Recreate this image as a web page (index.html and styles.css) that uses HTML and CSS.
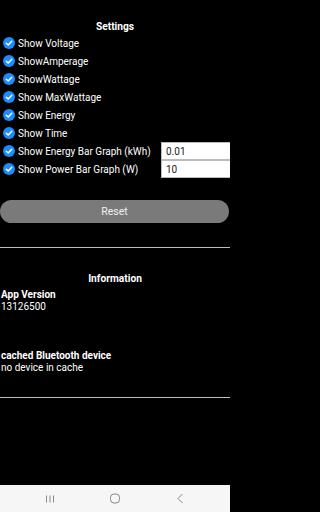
FILE: index.html
```html
<!DOCTYPE html>
<html>
<head>
<meta charset="utf-8">
<link rel="stylesheet" href="styles.css">
</head>
<body>
<div class="screen">
  <main class="content">
    <h2 class="title settings-title">Settings</h2>
    <ul class="options">
      <li class="opt"><span class="check"><svg viewBox="0 0 12 12"><circle cx="6" cy="6" r="6" fill="#1a8cff"/><path d="M3.3 6.2 L5.2 8 L8.8 4.3" fill="none" stroke="#fff" stroke-width="1.5" stroke-linecap="round" stroke-linejoin="round"/></svg></span><span class="lbl">Show Voltage</span></li>
      <li class="opt"><span class="check"><svg viewBox="0 0 12 12"><circle cx="6" cy="6" r="6" fill="#1a8cff"/><path d="M3.3 6.2 L5.2 8 L8.8 4.3" fill="none" stroke="#fff" stroke-width="1.5" stroke-linecap="round" stroke-linejoin="round"/></svg></span><span class="lbl">ShowAmperage</span></li>
      <li class="opt"><span class="check"><svg viewBox="0 0 12 12"><circle cx="6" cy="6" r="6" fill="#1a8cff"/><path d="M3.3 6.2 L5.2 8 L8.8 4.3" fill="none" stroke="#fff" stroke-width="1.5" stroke-linecap="round" stroke-linejoin="round"/></svg></span><span class="lbl">ShowWattage</span></li>
      <li class="opt"><span class="check"><svg viewBox="0 0 12 12"><circle cx="6" cy="6" r="6" fill="#1a8cff"/><path d="M3.3 6.2 L5.2 8 L8.8 4.3" fill="none" stroke="#fff" stroke-width="1.5" stroke-linecap="round" stroke-linejoin="round"/></svg></span><span class="lbl">Show MaxWattage</span></li>
      <li class="opt"><span class="check"><svg viewBox="0 0 12 12"><circle cx="6" cy="6" r="6" fill="#1a8cff"/><path d="M3.3 6.2 L5.2 8 L8.8 4.3" fill="none" stroke="#fff" stroke-width="1.5" stroke-linecap="round" stroke-linejoin="round"/></svg></span><span class="lbl">Show Energy</span></li>
      <li class="opt"><span class="check"><svg viewBox="0 0 12 12"><circle cx="6" cy="6" r="6" fill="#1a8cff"/><path d="M3.3 6.2 L5.2 8 L8.8 4.3" fill="none" stroke="#fff" stroke-width="1.5" stroke-linecap="round" stroke-linejoin="round"/></svg></span><span class="lbl">Show Time</span></li>
      <li class="opt"><span class="check"><svg viewBox="0 0 12 12"><circle cx="6" cy="6" r="6" fill="#1a8cff"/><path d="M3.3 6.2 L5.2 8 L8.8 4.3" fill="none" stroke="#fff" stroke-width="1.5" stroke-linecap="round" stroke-linejoin="round"/></svg></span><span class="lbl">Show Energy Bar Graph (kWh)</span><input class="field" type="text" value="0.01"></li>
      <li class="opt"><span class="check"><svg viewBox="0 0 12 12"><circle cx="6" cy="6" r="6" fill="#1a8cff"/><path d="M3.3 6.2 L5.2 8 L8.8 4.3" fill="none" stroke="#fff" stroke-width="1.5" stroke-linecap="round" stroke-linejoin="round"/></svg></span><span class="lbl">Show Power Bar Graph (W)</span><input class="field" type="text" value="10"></li>
    </ul>
    <button class="reset">Reset</button>
    <hr class="divider">
    <h2 class="title info-title">Information</h2>
    <div class="info">
      <div class="info-item">
        <div class="info-key">App Version</div>
        <div class="info-val">13126500</div>
      </div>
      <div class="info-item second">
        <div class="info-key">cached Bluetooth device</div>
        <div class="info-val">no device in cache</div>
      </div>
    </div>
    <hr class="divider divider-2">
  </main>
  <nav class="navbar">
    <span class="nav-btn"><svg width="12" height="10" viewBox="0 0 12 10"><path d="M2.5 1.5v7M6 1.5v7M9.5 1.5v7" stroke="#888" stroke-width="1" fill="none"/></svg></span>
    <span class="nav-btn"><svg width="12" height="11" viewBox="0 0 12 11"><rect x="1.5" y="1" width="9" height="9" rx="3.5" stroke="#888" stroke-width="1" fill="none"/></svg></span>
    <span class="nav-btn"><svg width="12" height="11" viewBox="0 0 12 11"><path d="M8.5 1 L4 5.5 L8.5 10" stroke="#888" stroke-width="1" fill="none"/></svg></span>
  </nav>
</div>
</body>
</html>
```
FILE: styles.css
```css
html, body {
  margin: 0;
  padding: 0;
  background: #000;
}
body {
  font-family: Roboto, "Liberation Sans", sans-serif;
  color: #fff;
  width: 230px;
  height: 512px;
  overflow: hidden;
}
.screen {
  display: flex;
  flex-direction: column;
  height: 512px;
}
.content {
  flex: 1;
  overflow: hidden;
}
.title {
  margin: 0;
  font-size: 10.2px;
  font-weight: bold;
  text-align: center;
  line-height: 13px;
}
.settings-title {
  padding-top: 20px;
}
.options {
  list-style: none;
  margin: 1px 0 0 0;
  padding: 0;
}
.opt {
  display: flex;
  align-items: center;
  height: 18px;
  font-size: 10px;
  padding-left: 3px;
}
.check {
  width: 12px;
  height: 12px;
  display: flex;
  margin-right: 3px;
}
.check svg {
  width: 12px;
  height: 12px;
}
.lbl {
  white-space: nowrap;
}
.field {
  margin-left: auto;
  width: 71px;
  height: 18px;
  box-sizing: border-box;
  border: 1px solid #bbb;
  background: #fff;
  color: #222;
  font-family: Roboto, "Liberation Sans", sans-serif;
  font-size: 10px;
  padding: 0 4px;
  flex: none;
  margin-right: -2px;
}
.reset {
  display: block;
  margin: 22px 1px 0 0;
  width: 229px;
  height: 23px;
  border: none;
  border-radius: 12px;
  background: #7a7a7a;
  color: #f0f0f0;
  font-family: Roboto, "Liberation Sans", sans-serif;
  font-size: 10.5px;
  padding: 0;
}
.divider {
  margin: 24px 0 0 0;
  border: none;
  height: 1px;
  background: #bdbdbd;
}
.info-title {
  margin-top: 24px;
}
.info {
  padding-left: 1px;
  font-size: 10px;
  line-height: 12px;
  margin-top: 4px;
}
.info-key {
  font-weight: bold;
}
.second {
  margin-top: 37px;
}
.divider-2 {
  margin-top: 23px;
}
.navbar {
  height: 27px;
  background: #f6f6f6;
  display: flex;
  justify-content: center;
  gap: 45px;
  align-items: center;
}
.nav-btn {
  display: flex;
  width: 20px;
  justify-content: center;
}
```
